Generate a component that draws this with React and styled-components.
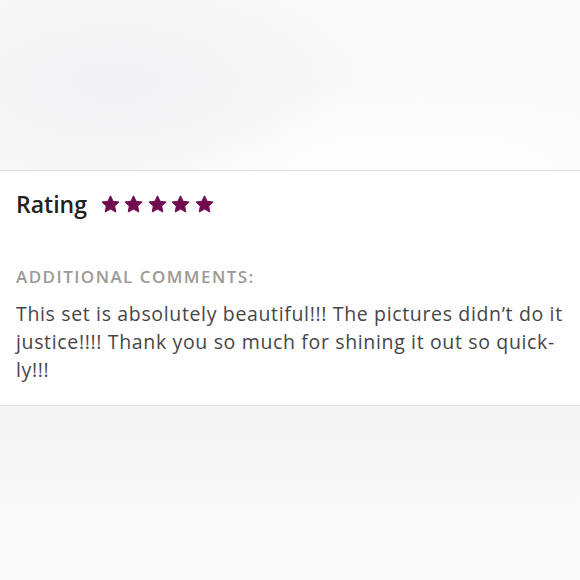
import React from 'react';
import styled, { createGlobalStyle } from 'styled-components';

const Global = createGlobalStyle`
  html, body {
    margin: 0;
    padding: 0;
    background: #f8f7f8;
  }
  body {
    font-family: "Open Sans", Lato, sans-serif;
  }
`;

const Page = styled.div`
  width: 580px;
  height: 580px;
  display: flex;
  flex-direction: column;
  background:
    radial-gradient(ellipse 240px 110px at 115px 82px, #f2f1f3 0%, rgba(249, 248, 249, 0) 100%),
    radial-gradient(ellipse 320px 90px at 420px 170px, #ffffff 0%, rgba(255, 255, 255, 0) 100%),
    linear-gradient(#faf9fa, #faf9fa 400px, #f4f4f4 410px, #fbfafb 520px);
  overflow: hidden;
`;

const Blank = styled.div`
  height: ${p => p.h}px;
  flex-shrink: 0;
`;

const Card = styled.div`
  background: #fff;
  border-top: 1.5px solid #e2e0df;
  border-bottom: 1.5px solid #e2e0df;
  padding: 16px 16px 21px;
`;

const RatingRow = styled.div`
  display: flex;
  align-items: center;
  gap: 14px;
  height: 34px;
`;

const Label = styled.span`
  font-size: 23px;
  font-weight: 600;
  color: #232122;
`;

const Stars = styled.div`
  display: flex;
  gap: 4.5px;
  padding-top: 1px;
`;

const Heading = styled.div`
  margin-top: 44px;
  font-size: 17px;
  font-weight: 600;
  letter-spacing: 1.45px;
  color: #9d9995;
  text-transform: uppercase;
`;

const Body = styled.p`
  margin: 12px 0 0;
  font-size: 19.5px;
  line-height: 28px;
  letter-spacing: 0.65px;
  color: #474546;
`;

const Star = () => (
  <svg width="19" height="19" viewBox="0 0 24 24">
    <path
      d="M12 1l3.3 6.9 7.5.9-5.5 5.2 1.4 7.5L12 17.8l-6.7 3.7 1.4-7.5L1.2 8.8l7.5-.9z"
      fill="#700b50"
      stroke="#700b50"
      strokeWidth="1.2"
      strokeLinejoin="round"
    />
  </svg>
);

export default function App() {
  return (
    <Page>
      <Global />
      <Blank h={170} />
      <Card>
        <RatingRow>
          <Label>Rating</Label>
          <Stars>
            {[0, 1, 2, 3, 4].map(i => <Star key={i} />)}
          </Stars>
        </RatingRow>
        <Heading>Additional comments:</Heading>
        <Body>
          This set is absolutely beautiful!!! The pictures didn’t do it justice!!!! Thank you so much for shining it out so quick&shy;ly!!!
        </Body>
      </Card>
    </Page>
  );
}
